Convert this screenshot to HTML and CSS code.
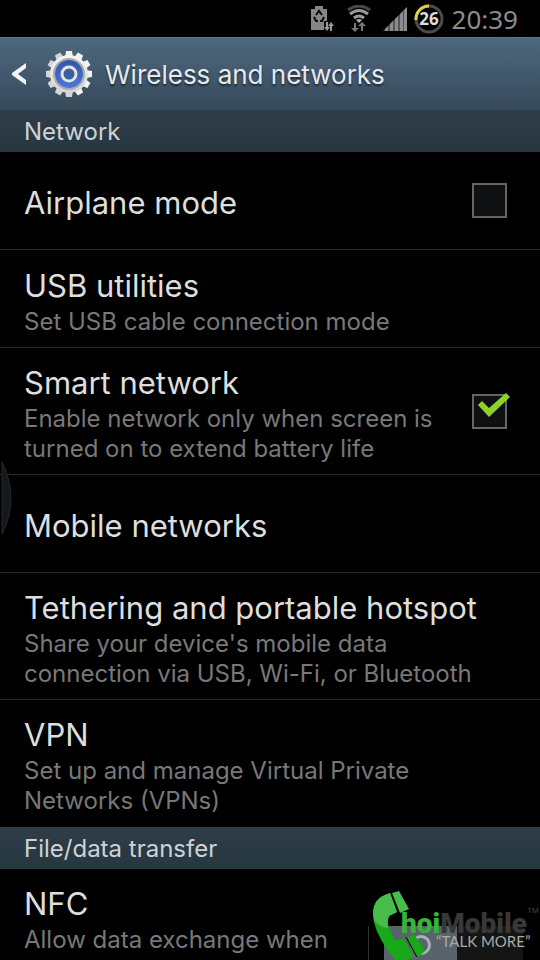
FILE: index.html
```html
<!DOCTYPE html>
<html lang="en">
<head>
<meta charset="utf-8">
<meta name="viewport" content="width=device-width, initial-scale=1">
<title>Wireless and networks</title>
<link rel="stylesheet" href="styles.css">
</head>
<body>
<div class="screen">
  <div class="status">
    <svg class="status-icon" width="26" height="28" viewBox="0 0 26 28" aria-hidden="true">
      <path fill="#858585" d="M5 1h8v3h4v21H1V4h4z"/>
      <path fill="none" stroke="#080808" stroke-width="2" d="M6 10l3-4 3 4M4 12l2 4h2M14 12l-2 4h-2"/>
      <path fill="#080808" d="M14 16h12v12H14z"/>
      <path fill="#9a9a9a" d="M16 17h2v5h2l-3 4-3-4h2zM22 26h-2v-5h-2l3-4 3 4h-2z"/>
    </svg>
    <svg class="status-icon" width="26" height="28" viewBox="0 0 26 28" aria-hidden="true">
      <g fill="none" stroke-width="3">
        <path stroke="#484848" d="M2 5q11-8 22 0"/>
        <path stroke="#9a9a9a" d="M4 9q9-7 18 0M8 13q5-4 10 0"/>
      </g>
      <path fill="#aaa" d="M10 15q3-2 6 0l-3 3z"/>
      <path fill="#777" d="M8 18h2v5h3l-4 4-4-4h3zM17 26h-2v-5h-3l4-4 4 4h-3z"/>
    </svg>
    <svg class="status-icon" width="26" height="28" viewBox="0 0 26 28" aria-hidden="true">
      <path fill="#555" d="M1 26L25 2v24z"/>
      <path fill="#8c8c8c" d="M3 24l3-3v5H3zM8 19l3-3v10H8zM13 14l3-3v15h-3zM18 9l3-3v20h-3zM22 5l3-3v24h-3z"/>
    </svg>
    <svg class="battery" width="30" height="32" viewBox="0 0 30 32" aria-hidden="true">
      <circle cx="15" cy="16" r="13" fill="none" stroke="#4c4c4c" stroke-width="3"/>
      <path d="M2 17A13 13 0 0 1 15 3" fill="none" stroke="#e3cf3c" stroke-width="3"/>
      <text class="battery-text" x="15" y="22" text-anchor="middle">26</text>
    </svg>
    <time class="clock">20:39</time>
  </div>

  <header class="bar">
    <button class="back" aria-label="Back">
      <svg width="16" height="26" viewBox="0 0 16 26"><path d="M14 2v5L6 13l8 6v5L0 14v-2z" fill="#f4f4f4"/></svg>
    </button>
    <svg class="gear" width="48" height="48" viewBox="0 0 48 48" aria-hidden="true">
      <defs>
        <linearGradient id="metal" x1="0" y1="0" x2="0" y2="1"><stop offset="0" stop-color="#f5f5f5"/><stop offset="1" stop-color="#d4d4d4"/></linearGradient>
        <linearGradient id="blue" x1="0" y1="0" x2="0" y2="1"><stop offset="0" stop-color="#3156a8"/><stop offset="1" stop-color="#4a78d6"/></linearGradient>
        <path id="teeth" d="M21 1h6l1 7h-8zM21 47h6l1-7h-8z"/>
      </defs>
      <g fill="url(#metal)">
        <use href="#teeth"/><use href="#teeth" transform="rotate(30 24 24)"/><use href="#teeth" transform="rotate(60 24 24)"/>
        <use href="#teeth" transform="rotate(90 24 24)"/><use href="#teeth" transform="rotate(120 24 24)"/><use href="#teeth" transform="rotate(150 24 24)"/>
        <circle cx="24" cy="24" r="19"/>
      </g>
      <circle cx="24" cy="24" r="15" fill="none" stroke="#aaa" stroke-width="2"/>
      <circle cx="24" cy="24" r="14" fill="url(#blue)"/>
      <circle cx="24" cy="24" r="7" fill="#3c5f9f" stroke="#e2e4e8" stroke-width="3"/>
    </svg>
    <h1 class="bar-title">Wireless and networks</h1>
  </header>

  <main>
    <h2 class="section">Network</h2>
    <label class="row">
      <span class="text"><span class="title">Airplane mode</span></span>
      <span class="box"><input class="check" type="checkbox"></span>
    </label>
    <a class="row" href="#usb">
      <span class="text"><span class="title">USB utilities</span><span class="sub">Set USB cable connection mode</span></span>
    </a>
    <label class="row">
      <span class="text"><span class="title">Smart network</span><span class="sub">Enable network only when screen is<br>turned on to extend battery life</span></span>
      <span class="box"><input class="check" type="checkbox" checked>
        <svg class="tick" width="34" height="26" viewBox="0 0 34 26" aria-hidden="true"><path d="M1 12l4-4 7 7L29 0l4 4-21 20z" fill="#8fd02a"/></svg>
      </span>
    </label>
    <a class="row" href="#mobile">
      <span class="text"><span class="title">Mobile networks</span></span>
    </a>
    <a class="row" href="#tethering">
      <span class="text"><span class="title">Tethering and portable hotspot</span><span class="sub">Share your device's mobile data<br>connection via USB, Wi-Fi, or Bluetooth</span></span>
    </a>
    <a class="row last" href="#vpn">
      <span class="text"><span class="title">VPN</span><span class="sub">Set up and manage Virtual Private<br>Networks (VPNs)</span></span>
    </a>
    <h2 class="section">File/data transfer</h2>
    <label class="row nfc">
      <span class="text"><span class="title">NFC</span><span class="sub">Allow data exchange when</span></span>
      <span class="switch-area"><input class="switch" type="checkbox" role="switch"><span class="ring"></span></span>
    </label>
  </main>

  <svg class="edge" width="12" height="72" viewBox="0 0 12 72" aria-hidden="true"><path d="M2 0Q20 36 2 72z" fill="#15191b" stroke="#24292b"/></svg>

  <svg class="brand" width="170" height="70" viewBox="0 0 170 70" role="img" aria-label="ChoiMobile">
    <path fill="#18a918" d="M6 12Q10 6 20 3l7 19-8 4q-4 10 7 25l7-3 11 18-8 4H26Q8 50 4 32 1 20 6 12z"/>
    <path fill="#49bd4c" d="M6 12Q10 6 20 3l7 19-8 4q-2 5-1 12Q9 37 4 30 2 19 6 12zM22 3l7-2 10 18-9 4z"/>
    <path fill="#18a918" d="M37 48l7-4 11 17-8 7z"/>
    <path fill="none" stroke="#000" d="M21 3l8 20M36 47l11 20"/>
    <text class="brand-name" x="31" y="43"><tspan fill="#36b438">hoi</tspan><tspan fill="#383838">Mobile</tspan></text>
    <text class="brand-tm" x="157" y="23">TM</text>
    <text class="brand-tag" x="66" y="57">“TALK MORE”</text>
  </svg>
</div>
</body>
</html>
```
FILE: styles.css
```css
* { box-sizing: border-box; }

body {
  margin: 0;
  background: #000;
  color: #dedede;
  font-family: Inter, "Noto Sans", sans-serif;
  font-weight: 400;
}

.screen {
  position: relative;
  height: 100vh;
  overflow: hidden;
}

.status {
  display: flex;
  align-items: center;
  justify-content: flex-end;
  gap: 10px;
  height: 37px;
  padding-right: 22px;
}

.battery { margin-left: -4px; }

.battery-text {
  font: 700 17px "Noto Sans", sans-serif;
  fill: #ddd;
}

.clock {
  margin-left: -2px;
  color: #8c8c8c;
  font-size: 26px;
  font-family: "Noto Sans", sans-serif;
}

.bar {
  display: flex;
  align-items: center;
  height: 73px;
  padding: 0 12px;
  background: linear-gradient(#4f687f, #364a5a);
  border-top: 1px solid #5f7486;
}

.back {
  display: flex;
  padding: 0;
  border: 0;
  background: none;
}

.gear { margin: 0 12px 0 17px; }

.bar-title {
  margin: 0;
  font-size: 26px;
  font-weight: 400;
  color: #e6eaee;
  text-shadow: 0 2px 2px #1c2935;
}

.section {
  margin: 0;
  height: 42px;
  padding: 0 24px;
  background: linear-gradient(#2f3d49, #263740);
  color: #ccd3d8;
  font-size: 24px;
  font-weight: 400;
  line-height: 44px;
}

.row {
  display: flex;
  align-items: center;
  min-height: 98px;
  padding: 14px 30px 10px 24px;
  border-bottom: 1px solid #282a2b;
  color: inherit;
  text-decoration: none;
}

.last { border-bottom-color: #000; }

.text { flex: 1; }

.title, .sub { display: block; }

.title {
  font-size: 31px;
  line-height: 42px;
  white-space: nowrap;
}

.sub {
  color: #787878;
  font-size: 24px;
  line-height: 30px;
  white-space: nowrap;
}

.box {
  position: relative;
  display: flex;
  margin: 0 3px 4px 0;
}

.check {
  appearance: none;
  width: 35px;
  height: 35px;
  margin: 0;
  border: 2px solid #626668;
  background: #0e1012;
}

.tick {
  position: absolute;
  left: 5px;
  top: -1px;
}

.nfc {
  align-items: flex-start;
  padding-right: 17px;
}

.switch-area {
  position: relative;
  display: flex;
  margin-top: 43px;
  padding-left: 15px;
  border-left: 1px solid #303030;
}

.switch {
  appearance: none;
  width: 139px;
  height: 44px;
  margin: 0;
  background: linear-gradient(90deg, #58636c 73px, #151515 73px);
}

.ring {
  position: absolute;
  left: 42px;
  top: 9px;
  width: 20px;
  height: 20px;
  border: 3px solid #aab1b6;
  border-radius: 50%;
}

.edge {
  position: absolute;
  left: 0;
  top: 462px;
}

.brand {
  position: absolute;
  right: 0;
  bottom: 0;
}

.brand-name {
  font: 900 28px Roboto, sans-serif;
}

.brand-tm {
  font: 8px "Liberation Sans", sans-serif;
  fill: #444;
}

.brand-tag {
  font: 15px Lato, sans-serif;
  fill: #aaa;
}
```
